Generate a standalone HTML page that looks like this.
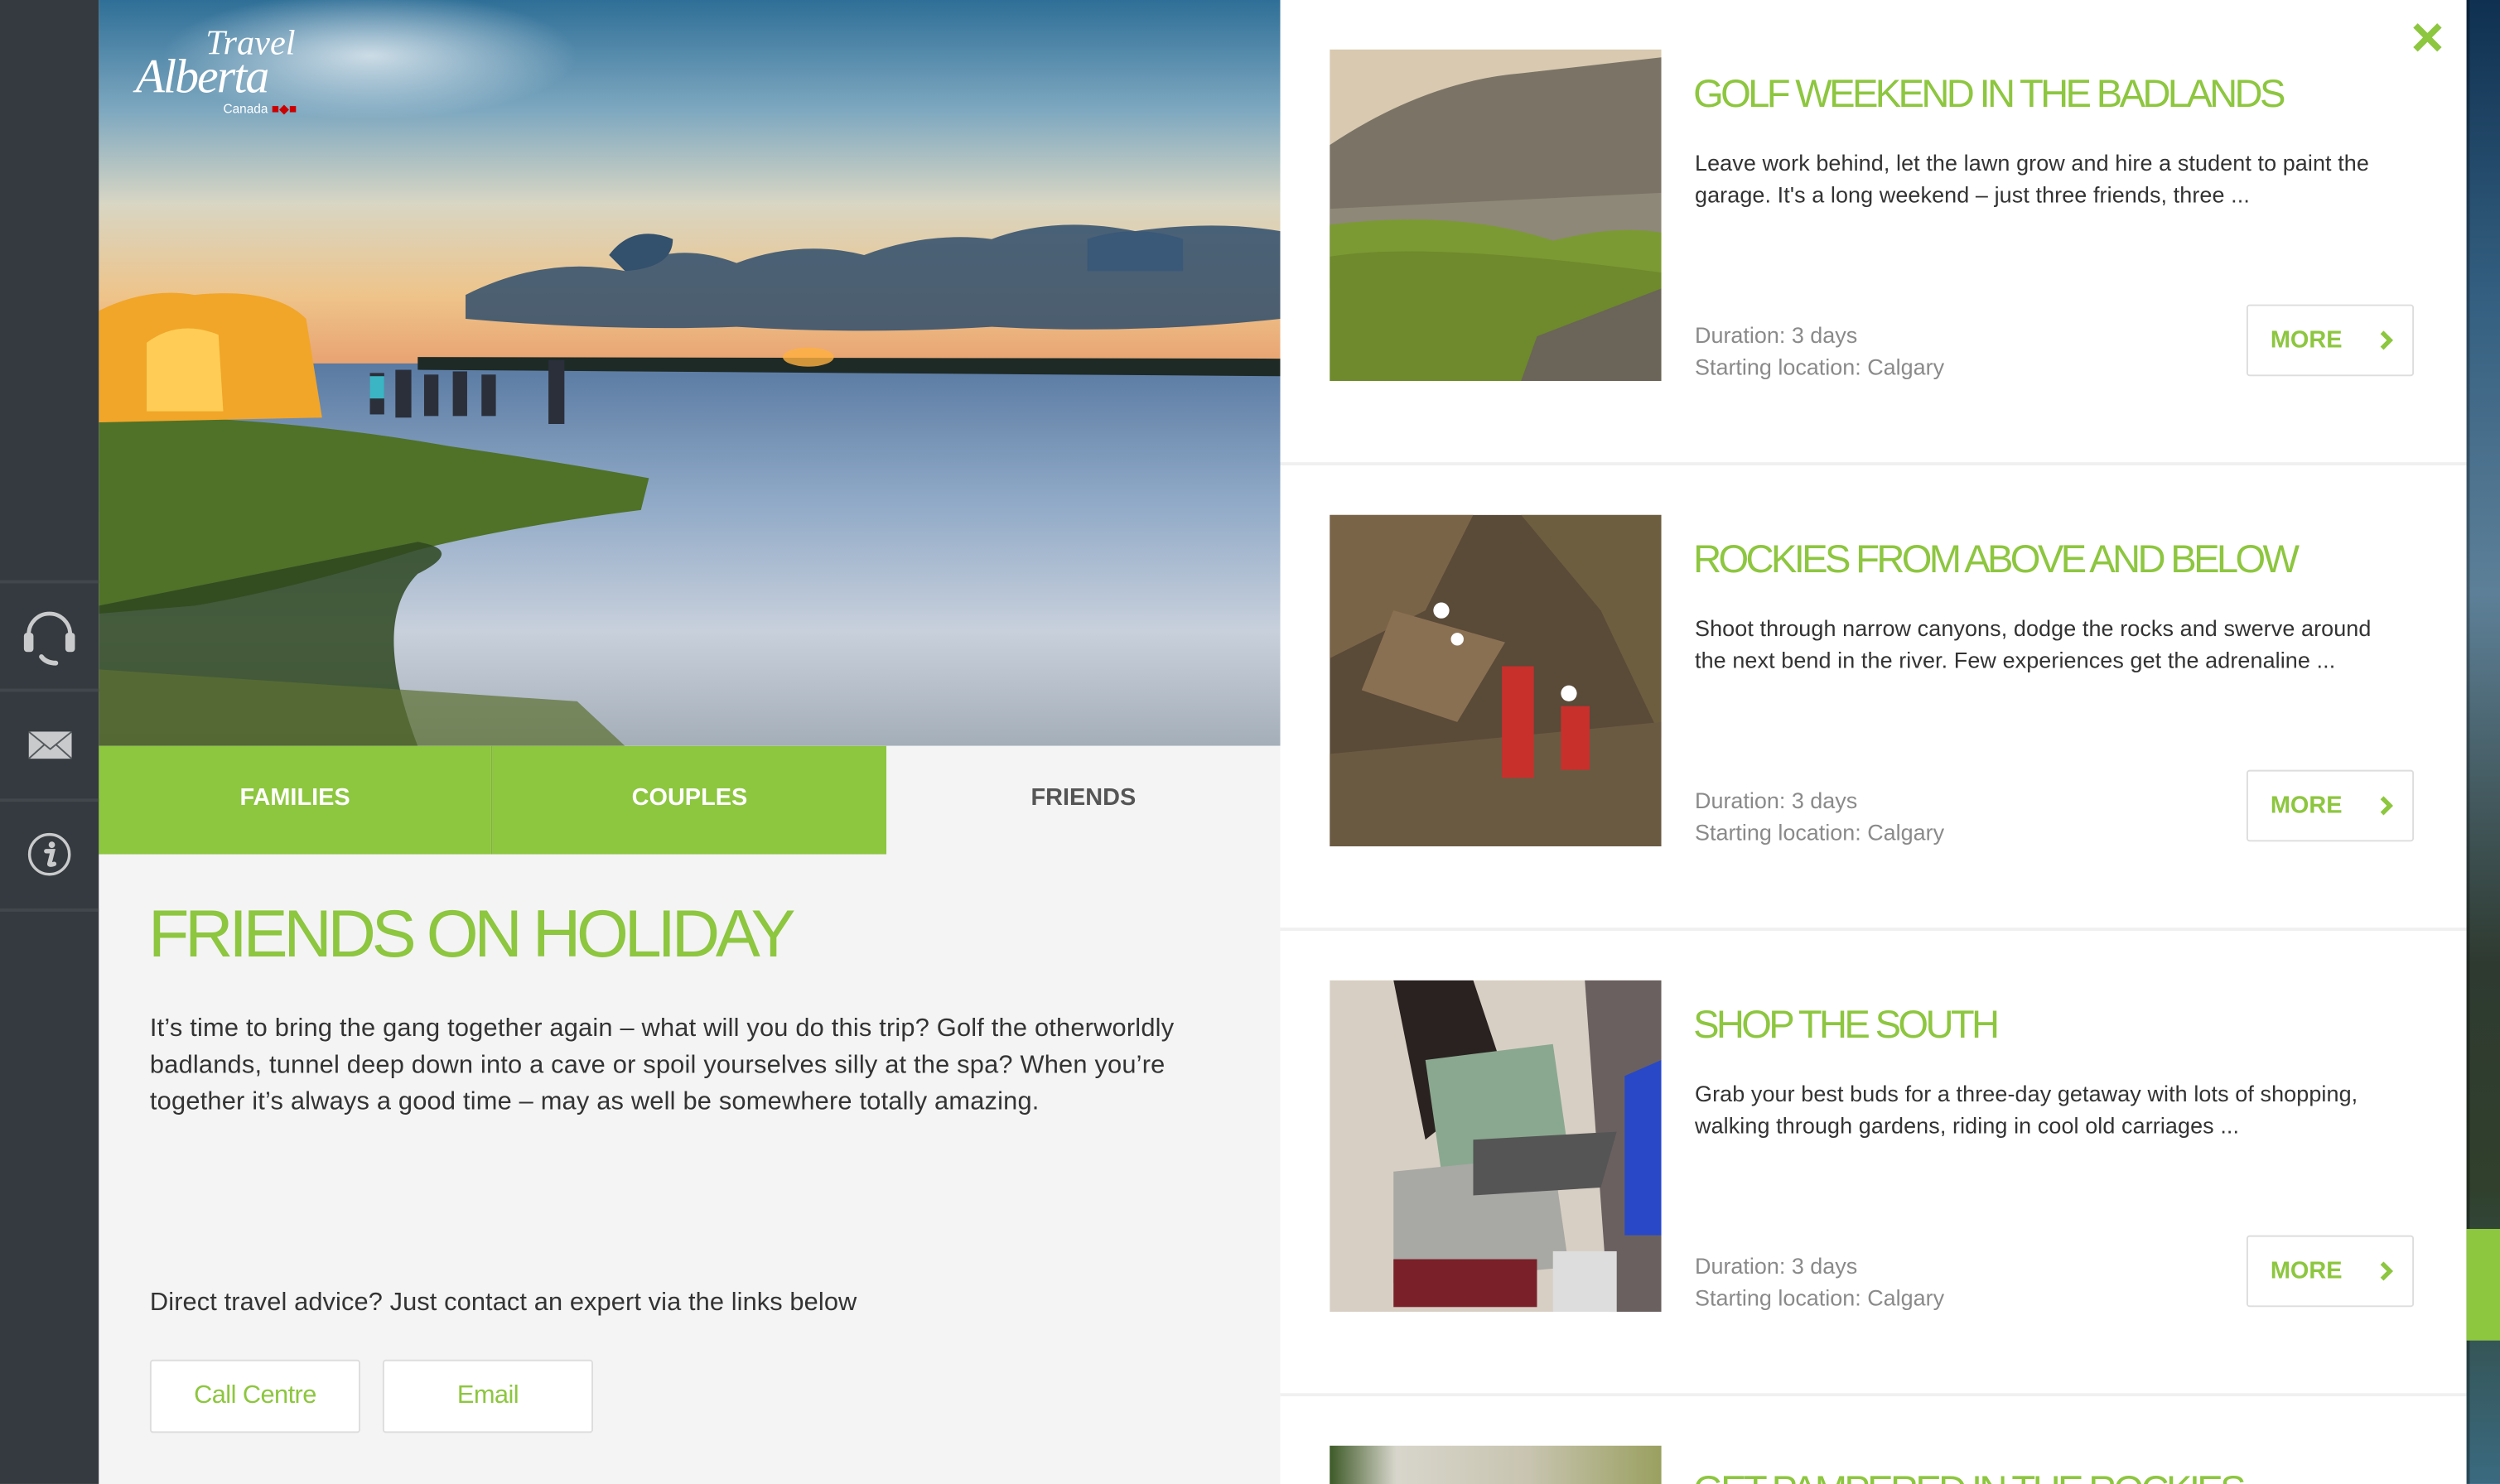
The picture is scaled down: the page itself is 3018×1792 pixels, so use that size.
<!DOCTYPE html>
<html><head><meta charset="utf-8">
<style>
html,body{margin:0;padding:0;width:3018px;height:1792px;overflow:hidden;background:#fff}
#s{position:absolute;left:0;top:0;width:1568px;height:931px;transform:scale(1.92475);transform-origin:0 0;font-family:"Liberation Sans",sans-serif;overflow:hidden}
.a{position:absolute}
.side{left:0;top:0;width:62px;height:931px;background:#343a3f}
.ln{left:0;width:62px;height:2px;background:#41474c}
.tab{top:468px;height:68px;line-height:66px;text-align:center;font-weight:bold;font-size:15px}
.ctitle{font-size:24.5px;letter-spacing:-1.9px;color:#8dc63f;white-space:nowrap}
.desc{font-size:14px;line-height:20px;color:#333;letter-spacing:0.05px;white-space:nowrap}
.meta{font-size:14px;line-height:20px;color:#8a8a8a;letter-spacing:0px}
.more{width:105px;height:45px;border:1px solid #ddd;border-radius:2px;background:#fff;box-sizing:border-box}
.more span{position:absolute;left:14px;top:13px;font-weight:bold;font-size:15px;color:#8dc63f}
.sep{left:803px;width:744px;height:2px;background:#f0f0f0}
.btn{top:853px;width:132px;height:46px;border:1px solid #ddd;box-sizing:border-box;background:#fff;color:#8dc63f;font-size:16px;text-align:center;line-height:44px;border-radius:2px;letter-spacing:-0.3px}
</style></head><body><div id="s">
<div class="a side"></div>
<div class="a ln" style="top:364px"></div><div class="a ln" style="top:432px"></div><div class="a ln" style="top:501px"></div><div class="a ln" style="top:570px"></div>
<svg class="a" style="left:12px;top:380px" width="38" height="40" viewBox="0 0 38 40"><path d="M6 24 V18 A13 13 0 0 1 32 18 V24" fill="none" stroke="#c9cacb" stroke-width="2.5"/><rect x="3" y="17" width="6" height="12" rx="2" fill="#c9cacb"/><rect x="29" y="17" width="6" height="12" rx="2" fill="#c9cacb"/><path d="M14 32 Q17 36 23 36" fill="none" stroke="#c9cacb" stroke-width="3" stroke-linecap="round"/></svg>
<svg class="a" style="left:18px;top:458px" width="27" height="19" viewBox="0 0 27 19"><rect x="0" y="1" width="27" height="17" fill="#c9cacb"/><path d="M0 1 L13.5 12 L27 1 M0 18 L10 9 M27 18 L17 9" fill="none" stroke="#555a5e" stroke-width="1"/></svg>
<svg class="a" style="left:16px;top:521px" width="30" height="30" viewBox="0 0 30 30"><circle cx="15" cy="15" r="12.5" fill="none" stroke="#c9cacb" stroke-width="1.8"/><circle cx="16.5" cy="9" r="2" fill="#c9cacb"/><path d="M13 13 H17 L15 21 Q15 22 18 21" fill="none" stroke="#c9cacb" stroke-width="2.8" stroke-linecap="round"/></svg>

<svg class="a" style="left:62px;top:0" width="741" height="468" viewBox="0 0 741 468" preserveAspectRatio="none">
<defs>
<linearGradient id="sky" x1="0" y1="0" x2="0" y2="1"><stop offset="0" stop-color="#2f6f97"/><stop offset=".3" stop-color="#7ea8c0"/><stop offset=".55" stop-color="#d8d6c4"/><stop offset=".8" stop-color="#eec48a"/><stop offset="1" stop-color="#e8a070"/></linearGradient>
<linearGradient id="lake" x1="0" y1="0" x2="0" y2="1"><stop offset="0" stop-color="#5a7aa2"/><stop offset=".35" stop-color="#8ea8c6"/><stop offset=".7" stop-color="#c8d0dc"/><stop offset="1" stop-color="#a4aeb8"/></linearGradient>
<radialGradient id="cl" cx=".5" cy=".5" r=".5"><stop offset="0" stop-color="#fff" stop-opacity=".7"/><stop offset="1" stop-color="#fff" stop-opacity="0"/></radialGradient>
</defs>
<rect width="741" height="232" fill="url(#sky)"/>
<ellipse cx="170" cy="35" rx="130" ry="40" fill="url(#cl)"/>
<path d="M230 185 Q280 160 330 170 Q360 150 400 165 Q440 150 480 160 Q520 145 560 150 Q600 135 650 145 Q700 138 741 145 L741 200 Q650 210 560 205 Q480 210 400 205 Q320 208 230 200 Z" fill="#2f4e6c" opacity=".85"/>
<path d="M320 160 Q335 140 360 150 Q360 168 330 170 Z" fill="#33506c"/>
<path d="M620 150 Q650 140 680 150 L680 170 L620 170 Z" fill="#3a5878"/>
<rect y="228" width="741" height="240" fill="url(#lake)"/>
<path d="M200 224 L741 225 L741 236 L200 232 Z" fill="#1e2a26"/>
<ellipse cx="445" cy="224" rx="16" ry="6" fill="#ffb040" opacity=".8"/>
<path d="M0 260 Q120 262 220 280 Q290 290 345 300 L340 320 Q260 330 200 345 Q120 370 60 380 L0 385 Z" fill="#4f7228"/>
<path d="M0 380 Q100 360 200 340 Q230 345 200 360 Q170 390 200 468 L0 468 Z" fill="#2e4620" opacity=".85"/>
<path d="M0 420 L300 440 L330 468 L0 468 Z" fill="#5c7032" opacity=".7"/>
<path d="M0 195 Q30 180 60 185 Q110 180 130 200 L140 262 L0 265 Z" fill="#f1a629"/>
<path d="M30 215 Q50 200 75 210 L78 258 L30 258 Z" fill="#ffcd55"/>
<g fill="#2b2f3a"><rect x="170" y="234" width="9" height="26"/><rect x="186" y="232" width="10" height="30"/><rect x="204" y="235" width="9" height="26"/><rect x="222" y="233" width="9" height="28"/><rect x="240" y="235" width="9" height="26"/><rect x="282" y="226" width="10" height="40"/></g>
<rect x="170" y="236" width="9" height="14" fill="#3bb5c4"/>
</svg>
<div class="a" style="left:85px;top:14px;width:130px;height:60px;color:#fff;font-family:'Liberation Serif',serif;font-style:italic">
<div class="a" style="left:44px;top:0;font-size:22px">Travel</div>
<div class="a" style="left:0;top:18px;font-size:30px;letter-spacing:-1px">Alberta</div>
<div class="a" style="left:55px;top:50px;font-size:8px;font-family:'Liberation Sans',sans-serif;font-style:normal">Canada <span style="color:#c00">■◆■</span></div>
</div>

<div class="a tab" style="left:62px;width:246px;background:#8dc63f;color:#fff">FAMILIES</div>
<div class="a" style="left:308px;top:468px;width:1px;height:68px;background:#7fb537"></div>
<div class="a tab" style="left:309px;width:247px;background:#8dc63f;color:#fff">COUPLES</div>
<div class="a tab" style="left:556px;width:247px;background:#f4f4f4;color:#555">FRIENDS</div>
<div class="a" style="left:62px;top:536px;width:741px;height:395px;background:#f4f4f4"></div>
<div class="a" style="left:93px;top:562px;font-size:42px;letter-spacing:-2.7px;color:#8dc63f;white-space:nowrap">FRIENDS ON HOLIDAY</div>
<div class="a" style="left:94px;top:634px;font-size:16px;line-height:23px;color:#333;letter-spacing:0.1px;white-space:nowrap">It’s time to bring the gang together again – what will you do this trip? Golf the otherworldly<br>badlands, tunnel deep down into a cave or spoil yourselves silly at the spa? When you’re<br>together it’s always a good time – may as well be somewhere totally amazing.</div>
<div class="a" style="left:94px;top:809px;font-size:16px;color:#333;letter-spacing:0.05px;white-space:nowrap">Direct travel advice? Just contact an expert via the links below</div>
<div class="a btn" style="left:94px">Call Centre</div>
<div class="a btn" style="left:240px">Email</div>

<div class="a" style="left:803px;top:0;width:744px;height:931px;background:#fff"></div>
<svg class="a" style="left:1513px;top:14px" width="19" height="19" viewBox="0 0 19 19"><path d="M2 2 L17 17 M17 2 L2 17" stroke="#8dc63f" stroke-width="4"/></svg>

<!-- card 1 -->
<svg class="a" style="left:834px;top:31px" width="208" height="208" viewBox="0 0 208 208" preserveAspectRatio="none"><rect width="208" height="208" fill="#d8c9b0"/><path d="M0 60 Q60 20 120 15 L208 5 L208 120 L0 130 Z" fill="#7b7466"/><path d="M0 100 L208 90 L208 150 L0 150 Z" fill="#8e8878"/><path d="M0 110 Q80 100 140 120 Q180 110 208 115 L208 208 L0 208 Z" fill="#7c9a33"/><path d="M0 130 Q60 120 208 140 L208 208 L0 208 Z" fill="#6e8a2c"/><path d="M130 180 L208 150 L208 208 L120 208 Z" fill="#6b6458"/></svg>
<div class="a ctitle" style="left:1062px;top:46px">GOLF WEEKEND IN THE BADLANDS</div>
<div class="a desc" style="left:1063px;top:92px">Leave work behind, let the lawn grow and hire a student to paint the<br>garage. It's a long weekend – just three friends, three ...</div>
<div class="a meta" style="left:1063px;top:200px">Duration: 3 days<br>Starting location: Calgary</div>
<div class="a more" style="left:1409px;top:191px"><span>MORE</span><svg class="a" style="left:82px;top:15px" width="10" height="13" viewBox="0 0 10 13"><path d="M2 1.5 L7 6.5 L2 11.5" fill="none" stroke="#8dc63f" stroke-width="2.8"/></svg></div>
<div class="a sep" style="top:290px"></div>

<!-- card 2 -->
<svg class="a" style="left:834px;top:323px" width="208" height="208" viewBox="0 0 208 208" preserveAspectRatio="none"><rect width="208" height="208" fill="#5a4a38"/><path d="M0 0 L90 0 L60 60 L0 90 Z" fill="#7a6448"/><path d="M120 0 L208 0 L208 140 L170 60 Z" fill="#6e5e40"/><path d="M0 150 L208 130 L208 208 L0 208 Z" fill="#6b5a42"/><path d="M40 60 L110 80 L80 130 L20 110 Z" fill="#8a7052"/><rect x="108" y="95" width="20" height="70" fill="#c8302c"/><rect x="145" y="120" width="18" height="40" fill="#c8302c"/><circle cx="70" cy="60" r="5" fill="#fff"/><circle cx="150" cy="112" r="5" fill="#fff"/><circle cx="80" cy="78" r="4" fill="#fff"/></svg>
<div class="a ctitle" style="left:1062px;top:338px">ROCKIES FROM ABOVE AND BELOW</div>
<div class="a desc" style="left:1063px;top:384px">Shoot through narrow canyons, dodge the rocks and swerve around<br>the next bend in the river. Few experiences get the adrenaline ...</div>
<div class="a meta" style="left:1063px;top:492px">Duration: 3 days<br>Starting location: Calgary</div>
<div class="a more" style="left:1409px;top:483px"><span>MORE</span><svg class="a" style="left:82px;top:15px" width="10" height="13" viewBox="0 0 10 13"><path d="M2 1.5 L7 6.5 L2 11.5" fill="none" stroke="#8dc63f" stroke-width="2.8"/></svg></div>
<div class="a sep" style="top:582px"></div>

<!-- card 3 -->
<svg class="a" style="left:834px;top:615px" width="208" height="208" viewBox="0 0 208 208" preserveAspectRatio="none"><rect width="208" height="208" fill="#d8cfc4"/><path d="M40 0 L90 0 L110 60 L60 100 Z" fill="#2a2220"/><path d="M60 50 L140 40 L150 110 L70 120 Z" fill="#8aa890"/><path d="M40 120 L140 110 L150 180 L40 190 Z" fill="#a8a8a4"/><path d="M160 0 L208 0 L208 208 L175 208 Z" fill="#6a6060"/><path d="M185 60 L208 50 L208 160 L185 160 Z" fill="#2848c8"/><path d="M90 100 L180 95 L170 130 L90 135 Z" fill="#555"/><rect x="40" y="175" width="90" height="30" fill="#7a2028"/><rect x="140" y="170" width="40" height="38" fill="#ddd"/></svg>
<div class="a ctitle" style="left:1062px;top:630px">SHOP THE SOUTH</div>
<div class="a desc" style="left:1063px;top:676px">Grab your best buds for a three-day getaway with lots of shopping,<br>walking through gardens, riding in cool old carriages ...</div>
<div class="a meta" style="left:1063px;top:784px">Duration: 3 days<br>Starting location: Calgary</div>
<div class="a more" style="left:1409px;top:775px"><span>MORE</span><svg class="a" style="left:82px;top:15px" width="10" height="13" viewBox="0 0 10 13"><path d="M2 1.5 L7 6.5 L2 11.5" fill="none" stroke="#8dc63f" stroke-width="2.8"/></svg></div>
<div class="a sep" style="top:874px"></div>

<!-- card 4 -->
<div class="a" style="left:834px;top:907px;width:208px;height:30px;background:linear-gradient(90deg,#3e5a28 0,#d8d6cc 20%,#c8c4b0 60%,#9aa060 100%)"></div>
<div class="a ctitle" style="left:1062px;top:922px">GET PAMPERED IN THE ROCKIES</div>

<!-- right strip -->
<div class="a" style="left:1547px;top:0;width:21px;height:931px;background:linear-gradient(180deg,#0f3050 0,#345f80 20%,#5d8098 40%,#2e3a30 65%,#30402c 80%,#3a6a80 100%)"></div>
<div class="a" style="left:1547px;top:0;width:2px;height:931px;background:rgba(0,0,0,.3)"></div>
<div class="a" style="left:1547px;top:771px;width:21px;height:70px;background:#8dc63f"></div>
</div></body></html>
